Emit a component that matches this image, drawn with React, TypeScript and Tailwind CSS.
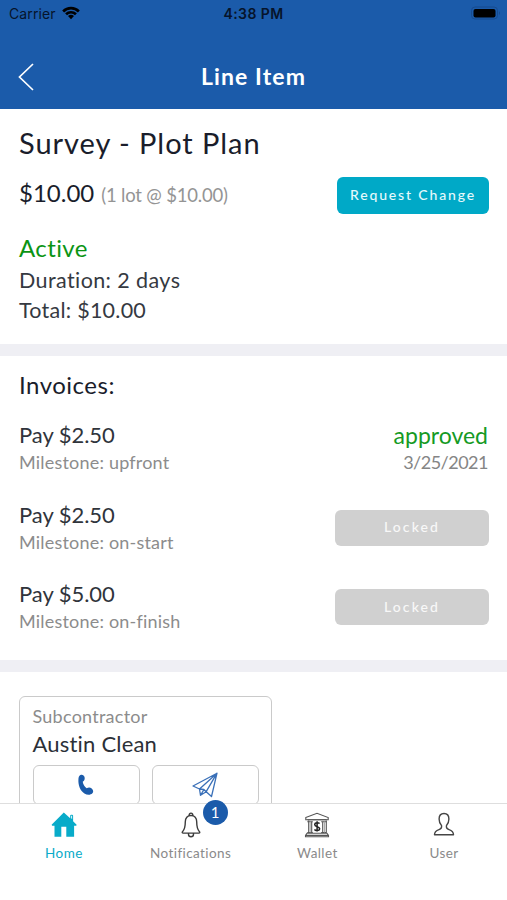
import { ReactElement } from 'react'
import classNames from 'clsx'

interface Invoice {
  id: number
  amount: string
  milestone: string
  approvedAt?: string
}

const invoices: Invoice[] = [
  { id: 1, amount: '$2.50', milestone: 'upfront', approvedAt: '3/25/2021' },
  { id: 2, amount: '$2.50', milestone: 'on-start' },
  { id: 3, amount: '$5.00', milestone: 'on-finish' },
]

function StatusBar() {
  return (
    <div className="grid h-[28px] grid-cols-3 items-center px-[9px] font-['Inter'] text-[14px] leading-[28px] text-[#06142b]">
      <div className="flex items-center gap-[6px]">
        <span className="tracking-[0.1px]">Carrier</span>
        <svg width="18" height="14" viewBox="0 0 18 14" className="-mt-[2px]">
          <path d="M0.2 4.4a12.5 12.5 0 0 1 17.6 0l-1.9 2a9.8 9.8 0 0 0-13.800 0z" fill="#000" />
          <path d="M3.1 7.3a8.4 8.4 0 0 1 11.8 0L13 9.2a5.7 5.7 0 0 0-8 0z" fill="#000" />
          <path d="M6 10.1a4.3 4.3 0 0 1 6 0L9 13.3z" fill="#000" />
        </svg>
      </div>
      <span className="text-center font-semibold tracking-[0.4px] whitespace-nowrap">
        4:38 PM
      </span>
      <svg width="31" height="14" viewBox="0 0 31 14" className="-mt-[2px] -mr-[4px] justify-self-end">
        <rect x="0.5" y="1" width="26" height="12" rx="3.5" fill="none" stroke="#174b8e" />
        <rect x="2.5" y="3" width="22" height="8.5" rx="2" fill="#000" />
        <path d="M28 5.2v3.6c1.3-.5 1.3-3.1 0-3.600z" fill="#174b8e" />
      </svg>
    </div>
  )
}

function Header() {
  return (
    <header className="h-[109px] bg-[#1b5baa]">
      <StatusBar />
      <div className="grid h-[81px] grid-cols-[60px_1fr_60px] items-center">
        <svg width="18" height="30" viewBox="0 0 18 30" className="mt-[16px] ml-[18px]">
          <path d="M15 2 1.5 15 15 28" fill="none" stroke="#fff" strokeWidth="1.7" />
        </svg>
        <h1 className="mt-[15px] text-center text-[23px] leading-[30px] font-bold tracking-[1.1px] text-white">
          Line Item
        </h1>
      </div>
    </header>
  )
}

function InvoiceRow({ invoice }: { invoice: Invoice }) {
  return (
    <div className="flex h-[79.6px] justify-between">
      <div>
        <div className="text-[22px] leading-[30px] tracking-[-0.05px] text-[#30343b]">
          Pay {invoice.amount}
        </div>
        <div className="text-[18px] leading-[25px] tracking-[0.2px] text-[#8c8c8c]">
          Milestone: {invoice.milestone}
        </div>
      </div>
      {invoice.approvedAt ? (
        <div className="pr-px text-right">
          <div className="text-[23px] leading-[30px] text-[#159a24]">approved</div>
          <div className="text-[18px] leading-[25px] tracking-[-0.5px] text-[#858585]">
            {invoice.approvedAt}
          </div>
        </div>
      ) : (
        <button className="mt-[10px] h-[36px] w-[154px] rounded-[6px] bg-[#d0d0d0] pb-[2px] text-[14px] font-medium tracking-[2.1px] text-[#f8f8f8]">
          Locked
        </button>
      )}
    </div>
  )
}

function Subcontractor() {
  return (
    <div className="mt-[24px] ml-[19px] h-[130px] w-[253px] rounded-[6px] border-[1.5px] border-[#cacaca] px-[12.5px] pt-[6px]">
      <div className="text-[18px] leading-[26px] tracking-[0.25px] text-[#8c8c8c]">
        Subcontractor
      </div>
      <div className="text-[22px] leading-[30px] tracking-[0.2px] text-[#2c3037]">
        Austin Clean
      </div>
      <div className="mt-[6px] flex gap-[12px]">
        <button className="flex h-[40px] w-[107.5px] items-center justify-center rounded-[6px] border-[1.5px] border-[#cacaca]">
          <svg width="16" height="22" viewBox="0 0 16 22">
            <path
              d="M2.400 1C4.200.3 6.200 1.200 6.600 3.200c.4 2.100-.3 3.700-1.900 4.500.5 2.700 1.900 5 4 6.600 1.500-1.200 3.500-1.200 5 .1 1.700 1.500 2 3.600.7 4.900-2 2-5.300 1.900-8 .1C2.300 16.700.1 11.300.4 5.700.5 3.300.9 1.700 2.400 1z"
              fill="#1b5baa"
            />
          </svg>
        </button>
        <button className="flex h-[40px] w-[107.5px] items-center justify-center rounded-[6px] border-[1.5px] border-[#cacaca]">
          <svg width="26" height="26" viewBox="0 0 26 26" fill="none" stroke="#3a70b8" strokeWidth="1.3" strokeLinejoin="round">
            <path d="M25 1.200 1 14l6.500 3L25 1.200 19.500 24.500l-5.300-4.800L25 1.200M7.500 17l1 6.300 5.700-3.600-2.300-2.200zM8.500 23.300l3.400-5.800" />
          </svg>
        </button>
      </div>
    </div>
  )
}

const homeIcon = (
  <svg width="26" height="26" viewBox="0 0 26 26" fill="#08abc9">
    <path d="M12.8.6.6 12.7l.5 1h2.400v11.100h6.800V14.700h5v10.100h7.800V13.700h2.200l.3-1-3.500-3.500V3.500c0-1-2.900-1-2.900 0v2.800z" />
    <path d="M20.200 3.800h.9v3.300l-.9-.9z" fill="#fff" />
  </svg>
)

const bellIcon = (
  <svg width="22" height="26" viewBox="0 0 22 26" fill="none" stroke="#3c3c3c" strokeWidth="1.4">
    <path d="M9.3 3.500a1.8 1.8 0 1 1 3.4 0M11 3.500c-3.600 0-5.700 2.500-5.700 6.300 0 5.400-.3 7.400-2.800 9.900-.6.8-.2 1.400.6 1.400h15.800c.8 0 1.200-.6.600-1.400-2.500-2.500-2.800-4.500-2.800-9.900 0-3.800-2.100-6.300-5.700-6.300zM8.500 21.300v.9a2.500 2.500 0 0 0 5 0v-.9" />
  </svg>
)

const bankIcon = (
  <svg width="26" height="26" viewBox="0 0 26 26" fill="none" stroke="#555" strokeWidth="1.1">
    <path d="M1.800 5.600 13 1.300l11.200 4.300v2.200H1.800z" />
    <path d="M3.300 7.800h19.400M3.300 9.800h5.500M17.200 9.800h5.500M3.300 20.500h5.500M17.200 20.500h5.500" />
    <path d="M4.700 8.500v12M22.300 8.500v12M7.700 9.800v10.700M18.700 9.800v10.700" />
    <path d="M6.200 9.800v10.700M20.500 9.800v10.700" stroke="#aaa" />
    <path d="M3 21.300h20l1.500 2.200v1.200h-23v-1.200zM1.500 23.400h23" />
    <path d="M15.600 11.500c-1.400-1.300-4.900-1-4.900 1.100 0 2.600 5 1.700 5 4.200 0 2.100-3.900 2.400-5.300.8M13.100 9.300v10.300" stroke="#222" strokeWidth="1.5" />
  </svg>
)

const userIcon = (
  <svg width="22" height="26" viewBox="0 0 22 26" fill="none" stroke="#454545" strokeWidth="1.4" strokeLinejoin="round">
    <path d="M11 1.500c-3.100 0-4.900 2.200-4.900 5.400 0 2.600.8 4.800 2.400 6.500.6 2.700-.4 3.500-2.500 4.200-2.900 1-4.500 1.900-4.500 5.200h19c0-3.300-1.600-4.200-4.500-5.200-2.100-.7-3.100-1.500-2.500-4.200 1.600-1.700 2.400-3.900 2.400-6.500 0-3.200-1.800-5.400-4.900-5.400z" />
  </svg>
)

interface Tab {
  label: string
  icon: ReactElement
  active?: boolean
  badge?: number
}

const tabs: Tab[] = [
  { label: 'Home', icon: homeIcon, active: true },
  { label: 'Notifications', icon: bellIcon, badge: 1 },
  { label: 'Wallet', icon: bankIcon },
  { label: 'User', icon: userIcon },
]

function TabBar() {
  return (
    <nav className="grid h-[97px] grid-cols-4 border-t-[1.5px] border-[#dedede] bg-white">
      {tabs.map(tab => (
        <div key={tab.label} className="flex flex-col items-center pt-[8px] pl-px">
          <div className="relative">
            {tab.icon}
            {!!tab.badge && (
              <span className="absolute -top-[12px] left-[23px] flex h-[25px] w-[25px] items-center justify-center rounded-full bg-[#1b5baa] text-[15px] text-white">
                {tab.badge}
              </span>
            )}
          </div>
          <span
            className={classNames(
              'mt-[6px] text-[13.5px] leading-[18px] tracking-[0.4px]',
              tab.active ? 'text-[#08abc9]' : 'text-[#8a8a8a]'
            )}
          >
            {tab.label}
          </span>
        </div>
      ))}
    </nav>
  )
}

export default function App() {
  return (
    <div className="flex h-[900px] w-full flex-col overflow-hidden bg-white font-['Lato',sans-serif]">
      <Header />
      <main className="min-h-0 flex-1 overflow-hidden">
        <section className="h-[235px] pt-[15px] pr-[18px] pl-[19px]">
          <h2 className="text-[29px] leading-[38px] tracking-[0.95px] text-[#1a1d2b]">
            Survey - Plot Plan
          </h2>
          <div className="mt-[15px] flex h-[37px] items-center justify-between">
            <div className="-mt-[3px] flex items-baseline gap-[7px] leading-[30px]">
              <span className="text-[24px] text-[#1a1d2b]">$10.00</span>
              <span className="text-[18.5px] tracking-[-0.2px] text-[#949494]">
                (1 lot @ $10.00)
              </span>
            </div>
            <button className="h-[37px] w-[152px] rounded-[6px] bg-[#00a9c7] pb-[2px] text-[14px] font-medium tracking-[1.85px] whitespace-nowrap text-[#e6f9fc]">
              Request Change
            </button>
          </div>
          <div className="mt-[18px] text-[24px] leading-[32px] tracking-[0.4px] text-[#0b9414]">
            Active
          </div>
          <div className="mt-px text-[21.5px] leading-[30px] tracking-[0.4px] text-[#353941]">
            Duration: 2 days
          </div>
          <div className="text-[21.5px] leading-[30px] tracking-[0.25px] text-[#353941]">
            Total: $10.00
          </div>
        </section>
        <div className="h-[12px] bg-[#efeff4]" />
        <section className="h-[304px] pt-[13px] pr-[18px] pl-[19px]">
          <h3 className="text-[24px] leading-[32px] tracking-[0.5px] text-[#1a1d2b]">
            Invoices:
          </h3>
          <div className="mt-[19px]">
            {invoices.map(invoice => (
              <InvoiceRow key={invoice.id} invoice={invoice} />
            ))}
          </div>
        </section>
        <div className="h-[12px] bg-[#efeff4]" />
        <Subcontractor />
      </main>
      <TabBar />
    </div>
  )
}
